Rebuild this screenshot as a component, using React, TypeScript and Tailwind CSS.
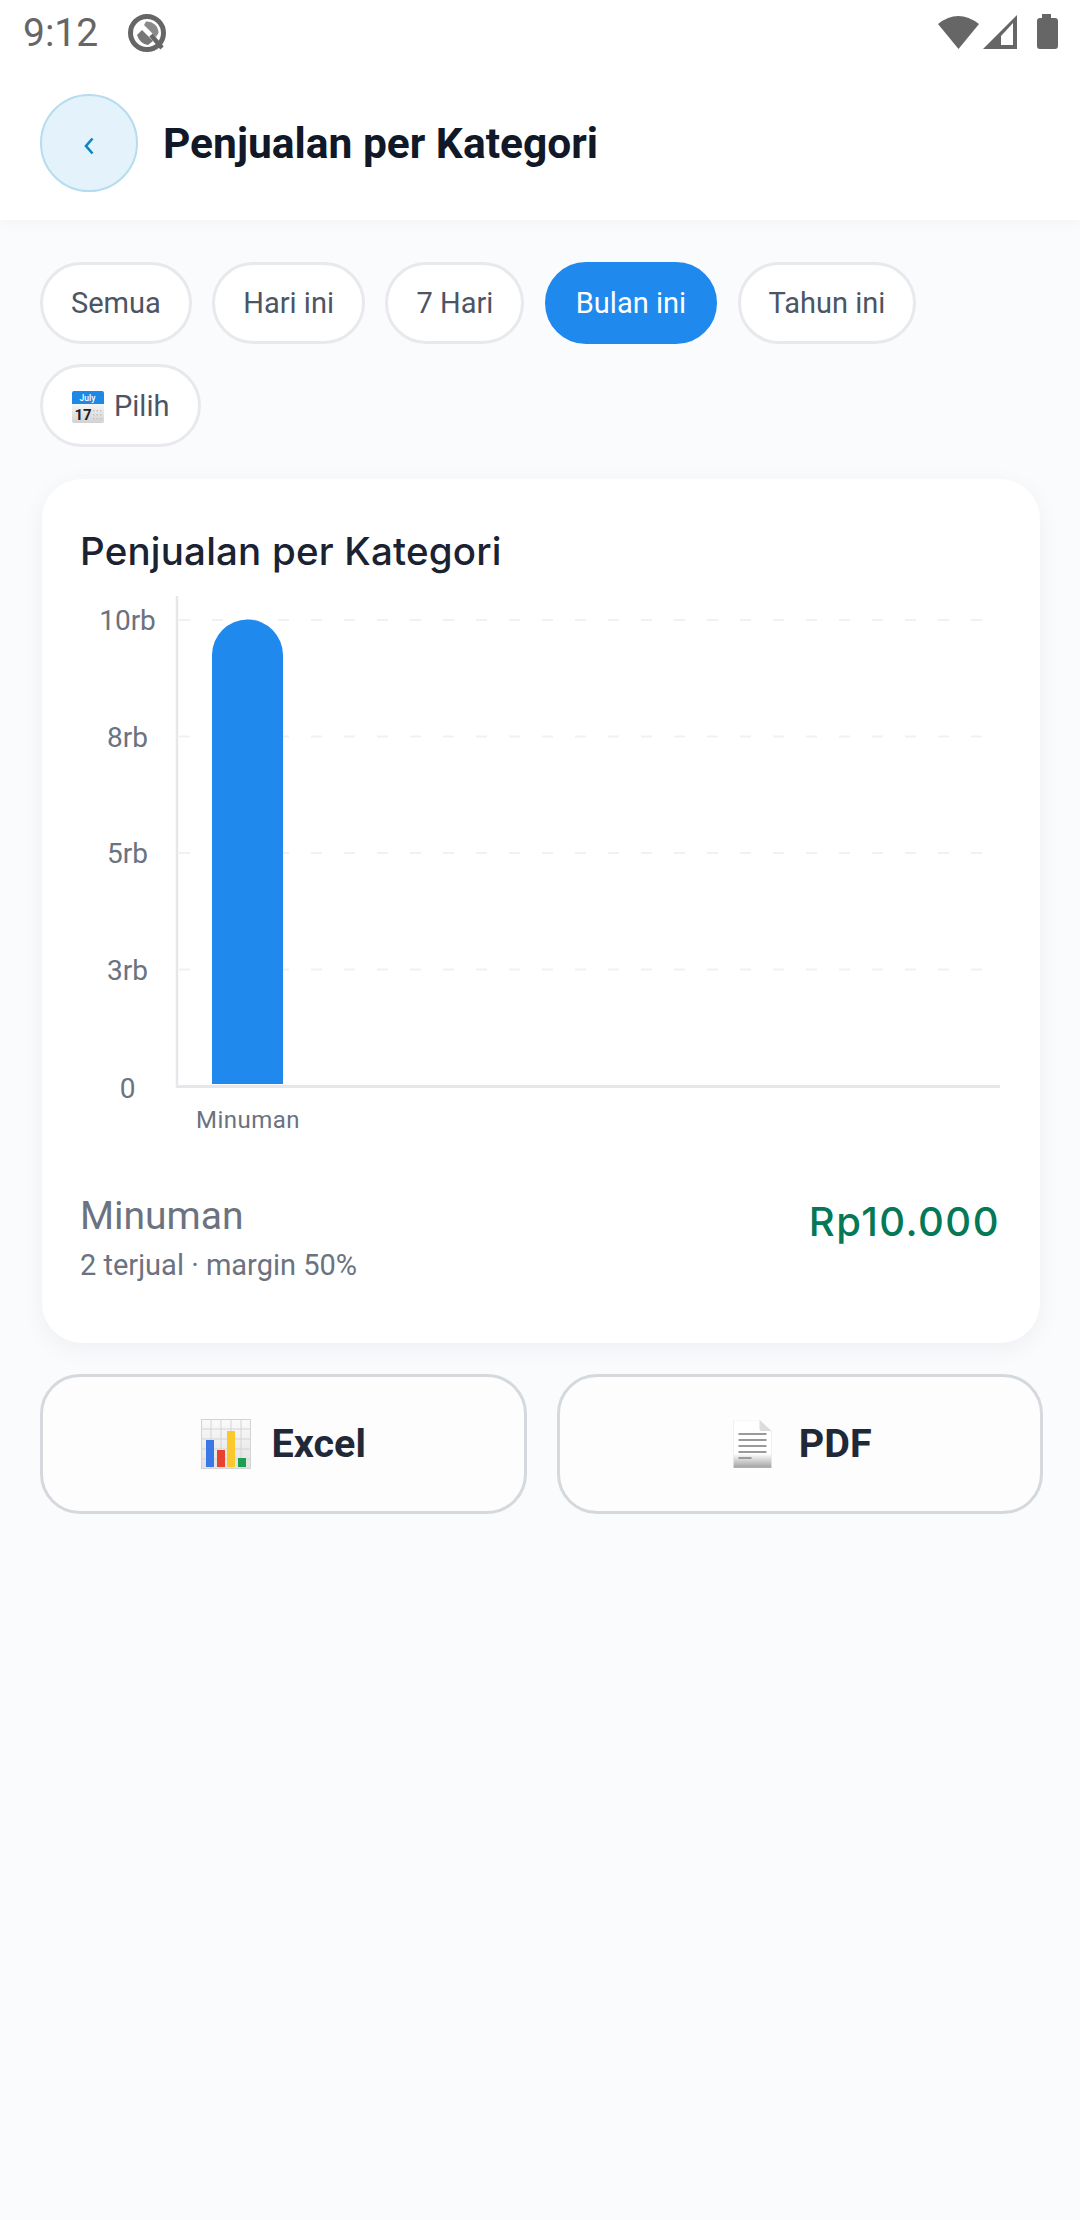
import React from 'react';

const filters = ['Semua', 'Hari ini', '7 Hari', 'Bulan ini', 'Tahun ini'];

const roboto = "font-['Roboto',sans-serif]";

const StatusBar: React.FC = () => (
  <div className="h-[66px] bg-white flex items-center pl-[23px] pr-[22px] justify-between relative z-10">
    <div className="flex items-center gap-[29px]">
      <span className={`${roboto} text-[39px] leading-none text-[#666666]`}>9:12</span>
      <svg width="40" height="40" viewBox="0 0 40 40">
        <circle cx="20" cy="20" r="16.5" fill="none" stroke="#666666" strokeWidth="5" />
        <path d="M19 8.5 A11.5 11.5 0 0 1 31.5 20 L29 24 L17 12 Z" fill="#8a8a8a" />
        <path d="M10 22 L15 17 L26 28 L21 32 Q13 31 10 22 Z" fill="#777777" />
        <path d="M24 22 L35 35" stroke="#666666" strokeWidth="4.5" />
      </svg>
    </div>
    <svg width="122" height="38" viewBox="0 0 122 38">
      <path d="M2 10 Q22 -6 43 10 L22.5 35 Z" fill="#666666" />
      <path d="M47 35 L81 1 V35 Z" fill="#666666" />
      <path d="M65 31 V22 L77 9 V31 Z" fill="#ffffff" />
      <path d="M106 4 V0 H115 V4 H119 Q122 4 122 7 V32 Q122 35 119 35 H104 Q101 35 101 32 V7 Q101 4 104 4 Z" fill="#666666" />
    </svg>
  </div>
);

const Header: React.FC = () => (
  <div className="h-[154px] bg-white flex items-start pl-[40px] gap-[25px] pt-[28px] shadow-[0_2px_12px_rgba(0,0,0,0.04)] relative">
    <button className="w-[98px] h-[98px] rounded-full bg-[#e3f2fb] border-2 border-[#b6dcf0] flex items-center justify-center">
      <svg width="12" height="18" viewBox="0 0 12 18" className="mt-[6px]">
        <path d="M9.5 1.5 L3 9 L9.5 16.5" fill="none" stroke="#0a85c7" strokeWidth="2.6" />
      </svg>
    </button>
    <h1 className={`${roboto} text-[42.5px] leading-[100px] font-bold text-[#111827]`}>Penjualan per Kategori</h1>
  </div>
);

const CalendarIcon: React.FC = () => (
  <svg width="32" height="32" viewBox="0 0 32 32">
    <defs>
      <linearGradient id="cal" x1="0" y1="0" x2="0" y2="1">
        <stop offset="0.4" stopColor="#f6f6f6" />
        <stop offset="1" stopColor="#d2d2d2" />
      </linearGradient>
    </defs>
    <rect x="0" y="0" width="32" height="32" rx="2" fill="url(#cal)" />
    <path d="M0 2 Q0 0 2 0 H30 Q32 0 32 2 V13 H0 Z" fill="#1e88e5" />
    <text x="15.5" y="9.5" fontSize="8.5" fontWeight="500" fill="#ffffff" textAnchor="middle" fontFamily="Roboto, sans-serif">July</text>
    <text x="11" y="29" fontSize="15" fontWeight="700" fill="#222222" textAnchor="middle" fontFamily="Roboto, sans-serif">17</text>
    {[21, 24.5, 28].map((x) =>
      [19, 23, 27].map((y) => <rect key={`${x}-${y}`} x={x} y={y} width="1.5" height="1.5" fill="#c2c2c2" />)
    )}
  </svg>
);

const ExcelIcon: React.FC = () => (
  <svg width="50" height="50" viewBox="0 0 50 50">
    <defs>
      <linearGradient id="sheet" x1="0" y1="0" x2="0" y2="1">
        <stop offset="0" stopColor="#fafafa" />
        <stop offset="1" stopColor="#e2e2e2" />
      </linearGradient>
    </defs>
    <rect width="50" height="50" fill="url(#sheet)" />
    {[0.5, 10, 20, 30, 40, 49.5].map((p) => (
      <React.Fragment key={p}>
        <line x1={p} x2={p} y1="0" y2="50" stroke="#d4d4d4" />
        <line y1={p} y2={p} x1="0" x2="50" stroke="#d4d4d4" />
      </React.Fragment>
    ))}
    <rect x="5" y="21" width="8" height="27" fill="#3b78e7" />
    <rect x="16" y="31" width="8" height="17" fill="#e8432e" />
    <rect x="26" y="12" width="8" height="36" fill="#fbc92c" />
    <rect x="37" y="39" width="8" height="9" fill="#1e9e50" />
  </svg>
);

const DocIcon: React.FC = () => (
  <svg width="39" height="48" viewBox="0 0 38 48">
    <defs>
      <linearGradient id="doc" x1="0" y1="0" x2="0" y2="1">
        <stop offset="0.7" stopColor="#ffffff" />
        <stop offset="1" stopColor="#a0a0a0" />
      </linearGradient>
    </defs>
    <path d="M0 0 H26 L38 11 V48 H0 Z" fill="url(#doc)" stroke="#e2e2e2" strokeWidth="0.5" />
    <path d="M26 0 L38 11 H28 Q26 11 26 9 Z" fill="#dcdcdc" />
    {[13, 19, 25, 31].map((y) => (
      <rect key={y} x="5" y={y} width="28" height="2" fill="#9a9a9a" />
    ))}
    <rect x="5" y="37" width="13" height="2" fill="#9a9a9a" />
  </svg>
);

const Chart: React.FC = () => {
  const ticks = [
    { label: '10rb', y: 620, grid: true },
    { label: '8rb', y: 736.5, grid: true },
    { label: '5rb', y: 853, grid: true },
    { label: '3rb', y: 969.5, grid: true },
    { label: '0', y: 1088, grid: false },
  ];
  return (
    <svg width="998" height="560" viewBox="42 590 998 560" className="block">
      {ticks.filter((t) => t.grid).map((t) => (
        <line key={t.y} x1="179" x2="990" y1={t.y} y2={t.y} stroke="#f0f1f3" strokeWidth="2" strokeDasharray="11 22" />
      ))}
      <line x1="177" x2="177" y1="596" y2="1088" stroke="#e5e7eb" strokeWidth="2.5" />
      <line x1="176" x2="1000" y1="1086.5" y2="1086.5" stroke="#e5e7eb" strokeWidth="3" />
      <path d="M212 1084 V655 A35.5 35.5 0 0 1 283 655 V1084 Z" fill="#1f89ee" />
      {ticks.map((t) => (
        <text key={t.label} x="127.5" y={t.y + 10} fontSize="28" fill="#6b7280" textAnchor="middle" fontFamily="Roboto, sans-serif">{t.label}</text>
      ))}
      <text x="248" y="1128" fontSize="24" letterSpacing="0.5" fill="#6b7280" textAnchor="middle" fontFamily="Roboto, sans-serif">Minuman</text>
    </svg>
  );
};

const App: React.FC = () => {
  return (
    <div className="w-[1080px] h-[2220px] bg-[#f9fbfd] overflow-hidden">
      <StatusBar />
      <Header />

      <div className="px-[40px] pt-[42px] flex flex-wrap gap-x-[20.5px] gap-y-[20px] w-[1000px]">
        {filters.map((f) => (
          <button
            key={f}
            className={`${roboto} h-[82px] px-[28px] pt-[2px] rounded-full text-[29px] border-[3px] ${
              f === 'Bulan ini' ? 'bg-[#1f89ee] border-[#1f89ee] text-white' : 'bg-white border-[#e8e9ec] text-[#4b5563]'
            }`}
          >
            {f}
          </button>
        ))}
        <button className={`${roboto} h-[83px] px-[29px] pt-[2px] rounded-full text-[29px] border-[3px] bg-white border-[#e8e9ec] text-[#4b5563] flex items-center gap-[10px]`}>
          <CalendarIcon />
          Pilih
        </button>
      </div>

      <div className="ml-[42px] mt-[32px] w-[998px] h-[864px] bg-white rounded-[40px] shadow-[0_6px_24px_rgba(17,24,39,0.05)]">
        <h2 className="font-['Inter',sans-serif] text-[38.5px] leading-[44px] tracking-[0.2px] font-medium text-[#1b2232] pl-[38px] pt-[50px] h-[111px]">Penjualan per Kategori</h2>
        <Chart />
        <div className="flex justify-between items-start pl-[38px] pr-[40px] mt-[44px]">
          <div>
            <div className={`${roboto} text-[39px] leading-[44px] text-[#6b7280]`}>Minuman</div>
            <div className={`${roboto} text-[29px] leading-[36px] text-[#6b7280] mt-[9px]`}>2 terjual · margin 50%</div>
          </div>
          <div className="font-['Inter',sans-serif] text-[40px] font-medium leading-[44px] tracking-[1.5px] text-[#047857] mt-[6px]">Rp10.000</div>
        </div>
      </div>

      <div className="ml-[40px] mt-[31px] w-[1003px] grid grid-cols-2 gap-[30px]">
        <button className={`${roboto} h-[140px] rounded-[40px] border-[3px] border-[#d5d8dc] bg-white/60 flex items-center justify-center gap-[21px] text-[39.5px] font-bold text-[#1f2937]`}>
          <ExcelIcon />
          Excel
        </button>
        <button className={`${roboto} h-[140px] rounded-[40px] border-[3px] border-[#d5d8dc] bg-white/60 flex items-center justify-center gap-[27px] pl-[5px] text-[39.5px] font-bold text-[#1f2937]`}>
          <DocIcon />
          PDF
        </button>
      </div>
    </div>
  );
};

export default App;
